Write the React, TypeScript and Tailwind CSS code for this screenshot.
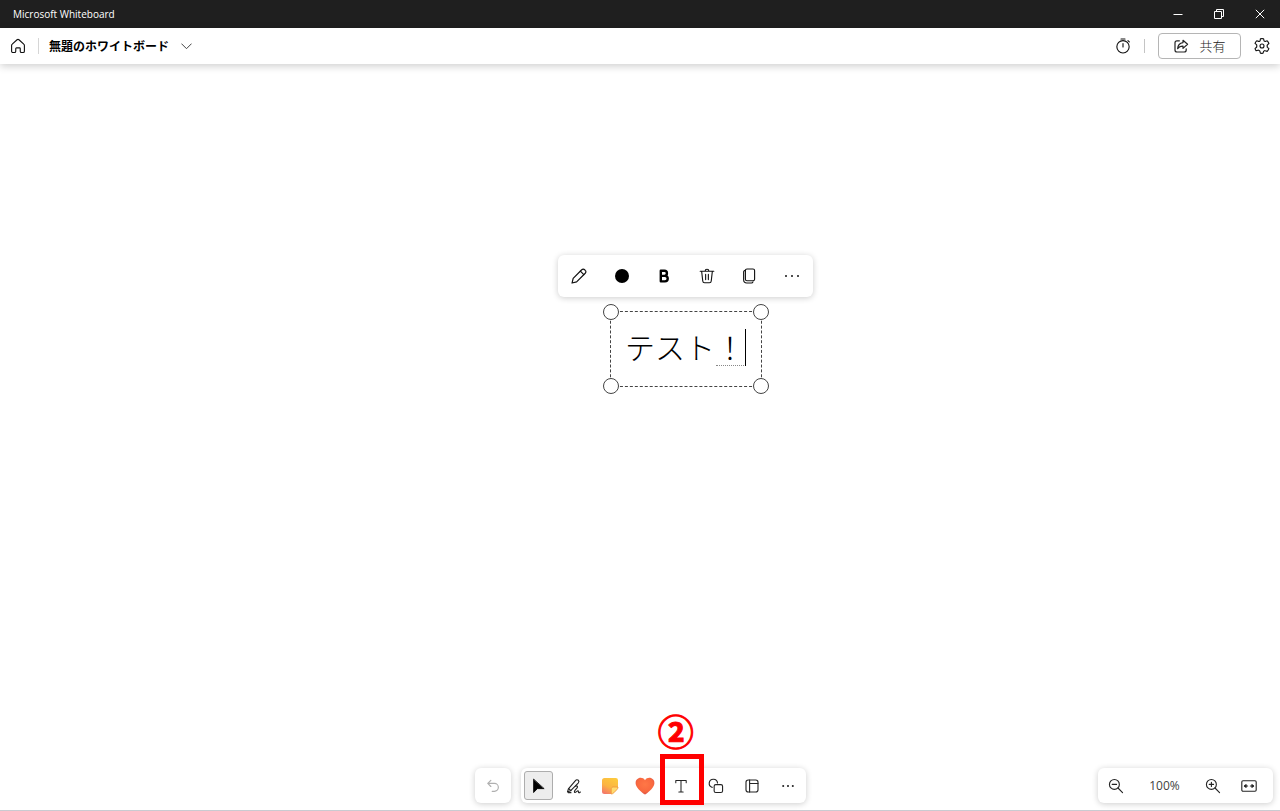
import type { ReactNode } from "react";

type IconProps = {
  size?: number;
  width?: number;
  children: ReactNode;
};

function Icon({ size = 16, width = 1.2, children }: IconProps) {
  return (
    <svg
      width={size}
      height={size}
      viewBox="0 0 20 20"
      fill="none"
      stroke="currentColor"
      strokeWidth={width}
      strokeLinecap="round"
      strokeLinejoin="round"
      aria-hidden="true"
      className="shrink-0"
    >
      {children}
    </svg>
  );
}

function TitleBar() {
  return (
    <div className="flex h-7 items-center justify-between bg-[#1f1f1f] pl-[13px] text-white">
      <h1 className="font-['Open_Sans','Noto_Sans',sans-serif] text-[10px] leading-4">Microsoft Whiteboard</h1>
      <div className="flex">
        <button aria-label="Minimize" className="flex h-7 w-[41px] items-center justify-center">
          <svg width="10" height="10" viewBox="0 0 10 10" stroke="currentColor" fill="none">
            <path d="M0.5 5.5h9" />
          </svg>
        </button>
        <button aria-label="Restore" className="flex h-7 w-[41px] items-center justify-center">
          <svg width="10" height="10" viewBox="0 0 10 10" stroke="currentColor" fill="none">
            <path d="M0.5 2.5h7v7h-7zM2.5 2.5v-2h7v7h-2" />
          </svg>
        </button>
        <button aria-label="Close" className="flex h-7 w-[41px] items-center justify-center">
          <svg width="10" height="10" viewBox="0 0 10 10" stroke="currentColor" fill="none">
            <path d="M0.8 0.8l8.4 8.4M9.2 0.8L0.8 9.2" />
          </svg>
        </button>
      </div>
    </div>
  );
}

function Header() {
  return (
    <header className="relative z-10 flex h-9 items-center justify-between bg-white px-2.5 shadow-[0_2px_8px_rgba(0,0,0,0.2)]">
      <div className="flex items-center">
        <button aria-label="ホーム">
          <Icon width={1.4}>
            <path d="M2 9.4c0-.7.3-1.3.8-1.700l6-5.500c.7-.6 1.700-.6 2.400 0l6 5.500c.5.4.8 1 .8 1.700v7.100c0 1-.7 1.700-1.600 1.700h-2c-.9 0-1.600-.7-1.600-1.600v-3.400c0-.5-.4-.9-.9-.9H8.100c-.5 0-.9.4-.9.9v3.400c0 .9-.7 1.600-1.600 1.600h-2C2.700 18.200 2 17.500 2 16.500z" />
          </Icon>
        </button>
        <span className="ml-3 h-4 w-px bg-[#d6d6d6]" />
        <button className="ml-2.5 flex items-center gap-3 text-xs font-bold text-black">
          無題のホワイトボード
          <svg width="11" height="7" viewBox="0 0 11 7" fill="none" stroke="#444" strokeLinecap="round">
            <path d="M0.7 0.9l4.8 4.8 4.8-4.8" />
          </svg>
        </button>
      </div>
      <div className="flex items-center">
        <button aria-label="タイマー">
          <Icon width={1.4}>
            <circle cx="10" cy="11" r="7.700" />
            <path d="M10 7v4.300M7.500 1.200h5M16.200 3.300l1.700 1.600" />
          </Icon>
        </button>
        <span className="ml-[13px] h-3.5 w-px bg-[#c4c4c4]" />
        <button className="ml-[13px] flex h-[26px] w-[83px] items-center justify-center gap-2.5 rounded border border-[#b5b5b5] text-[13px] leading-4 font-light text-[#242424]">
          <Icon width={1.5}>
            <path d="M8 3.500H5A2.500 2.500 0 0 0 2.500 6v9A2.500 2.500 0 0 0 5 17.500h9a2.500 2.500 0 0 0 2.500-2.500v-1.500" />
            <path d="M12.500 2.800l5.700 5.100-5.700 5.100v-2.900c-3.300-.1-5.300 1.100-6.700 3.200.3-4.200 2.700-7 6.700-7.600z" />
          </Icon>
          共有
        </button>
        <button aria-label="設定" className="ml-[13px]">
          <Icon width={1.4}>
            <circle cx="10" cy="10" r="2.500" />
            <path d="M8 1q2-.4 4 0l.5 2.400q.2.900 1.100.6l.6.3 2.300-.8q1.500 1.400 2.100 3.400l-1.800 1.600q-.7.800-.2 1.400v.6q-.4.500.2 1.200l1.800 1.600q-.6 2-2.100 3.400l-2.400-.8q-.8-.3-1.200.2l-.5.3q-.5.200-.6.900L11.300 19q-1.300.3-3.300 0l-.6-2.400q-.2-.7-.8-.9l-.4-.2q-.6-.4-1.300-.2l-2.300.7Q1.800 14.700 1.300 13.300l1.800-1.700q.6-.6.3-1.200v-.8q.3-.7-.3-1.300L1.300 6.700Q1.900 4.800 3.400 3.500l2.400.7q.7.200 1.200-.2l.3-.1q.3-.2.400-.7z" />
          </Icon>
        </button>
      </div>
    </header>
  );
}

function ObjectToolbar() {
  return (
    <div
      role="toolbar"
      className="absolute top-[191px] left-[558px] grid h-[42px] w-[255px] grid-cols-6 rounded-md bg-white shadow-[0_1px_6px_rgba(0,0,0,0.2)] *:flex *:items-center *:justify-center"
    >
      <button aria-label="編集">
        <Icon width={1.5}>
          <path d="M13.400 2.200a2.500 2.500 0 0 1 3.700 0l.7.700a2.500 2.500 0 0 1 0 3.700L7 17.400l-5.700 1.400L2.700 13z" />
          <path d="M11.700 4l4.300 4.300" />
        </Icon>
      </button>
      <button aria-label="色">
        <span className="size-3.5 rounded-full bg-black" />
      </button>
      <button aria-label="太字" className="text-black">
        <Icon width={3}>
          <path d="M6 3.500h4.500a3.100 3.100 0 0 1 0 6.300H6zM6 9.800h5.200a3.400 3.400 0 0 1 0 6.900H6z" />
        </Icon>
      </button>
      <button aria-label="削除">
        <Icon width={1.4}>
          <path d="M1.500 4h17M3.300 4l1.400 12.300A2.400 2.400 0 0 0 7 18.500h6a2.400 2.400 0 0 0 2.300-2.200L16.700 4M7.700 3.800a2.300 2.300 0 0 1 4.600 0M8.300 8v6.500M11.700 8v6.500" />
        </Icon>
      </button>
      <button aria-label="コピー">
        <Icon width={1.4}>
          <rect x="5.500" y="1.200" width="11.500" height="14.800" rx="2" />
          <path d="M5.500 3A2 2 0 0 0 3.300 5.200v9.600a4 4 0 0 0 4 4H13a2.200 2.200 0 0 0 2-1.500" />
        </Icon>
      </button>
      <button aria-label="その他" className="text-black">
        <Icon width={2.3}>
          <path d="M2.500 10h.01M10 10h.01M17.500 10h.01" />
        </Icon>
      </button>
    </div>
  );
}

function TextObject() {
  return (
    <div className="absolute top-[247px] left-[610px] flex h-[76px] w-[152px] items-start border border-dashed border-[#444] pt-3.5 pl-3.5">
      <div className="relative">
        <input
          aria-label="テキスト"
          defaultValue="テスト！"
          className="block h-10 w-[121px] bg-transparent text-[30px] leading-[38px] font-light text-black outline-none"
        />
        <span className="absolute right-0 bottom-0 w-[30px] border-b border-dotted border-[#888]" />
        <span className="absolute right-0 bottom-0 h-[37px] w-px bg-black" />
      </div>
      <span className="absolute -top-2 -left-2 size-4 rounded-full border border-[#444] bg-white" />
      <span className="absolute -top-2 -right-2 size-4 rounded-full border border-[#444] bg-white" />
      <span className="absolute -bottom-2 -left-2 size-4 rounded-full border border-[#444] bg-white" />
      <span className="absolute -right-2 -bottom-2 size-4 rounded-full border border-[#444] bg-white" />
    </div>
  );
}

function CreationBar() {
  return (
    <div className="flex gap-2.5">
      <button
        aria-label="元に戻す"
        className="flex h-[35px] w-9 items-center justify-center rounded-md bg-white text-[#b0b0b0] shadow-[0_1px_6px_rgba(0,0,0,0.2)]"
      >
        <Icon width={1.5}>
          <path d="M7.300 3L3.500 6.800l3.800 3.800M3.500 6.800h8.300a4.900 4.900 0 0 1 0 9.800H9" />
        </Icon>
      </button>
      <div
        role="toolbar"
        className="grid h-[35px] w-[285px] grid-cols-8 items-center justify-items-center rounded-md bg-white text-[#242424] shadow-[0_1px_6px_rgba(0,0,0,0.2)]"
      >
        <button
          aria-label="選択"
          className="flex size-[29px] items-center justify-center rounded-[3px] border border-[#adadad] bg-[#ededed] text-black"
        >
          <Icon width={1}>
            <path d="M4.500 1.800v16.400l4.700-4.900h8z" fill="currentColor" />
          </Icon>
        </button>
        <button aria-label="インク">
          <Icon width={1.4}>
            <path d="M3 13.700L11.800 3.200c1.200-1.400 2.700-1.300 3.600-.4.900.9.900 2.300-.2 3.500l-9 9.300-4.300 1.900z" />
            <path d="M12 10.300c1.300-.9 2.700-.4 2.300 1.200-.4 1.700-5 4.800-3.600 6.300 1.200 1.200 3.600-2.600 4.600-1.600.6.700-.2 1.900.7 2.200.6.200 1.300-.3 1.900-.9M3.500 13.500l2.700 2.200M3 18.300h3.200" />
          </Icon>
        </button>
        <button aria-label="付箋">
          <svg width="18" height="18" viewBox="0 0 18 18" aria-hidden="true">
            <defs>
              <linearGradient id="note" x1="0.7" y1="0" x2="0.2" y2="1">
                <stop offset="0" stopColor="#fdc93d" />
                <stop offset="0.55" stopColor="#fbb443" />
                <stop offset="1" stopColor="#f4766b" />
              </linearGradient>
            </defs>
            <path d="M3.500 1h11.200A2.300 2.300 0 0 1 17 3.300v6.900L10.300 17H3.500A2.500 2.500 0 0 1 1 14.500v-11A2.500 2.500 0 0 1 3.500 1z" fill="url(#note)" />
            <path d="M17 10c0 1-.5 2-1.200 2.700l-3 3.100c-.7.700-1.600 1.200-2.600 1.200v-5c0-1.100.9-2 2-2z" fill="#ffdc70" stroke="#f09a3e" strokeWidth="0.9" />
          </svg>
        </button>
        <button aria-label="リアクション">
          <svg width="20" height="18" viewBox="0 0 20 18" aria-hidden="true">
            <defs>
              <radialGradient id="heart" cx="0.5" cy="0.4" r="0.6">
                <stop offset="0" stopColor="#ff7746" />
                <stop offset="0.7" stopColor="#f9693f" />
                <stop offset="1" stopColor="#dc5548" />
              </radialGradient>
            </defs>
            <path d="M10 3.200C11.500.8 14 .4 16 1.100c2.400.9 3.500 3 3.400 5.200-.2 4.300-5 8-8.400 10.700-.6.500-1.400.5-2 0C5.600 14.300.8 10.600.6 6.300.5 4.100 1.600 2 4 1.100 6 .4 8.500.8 10 3.200z" fill="url(#heart)" />
          </svg>
        </button>
        <div className="relative flex">
          <button aria-label="テキスト">
            <Icon width={1.3}>
              <path d="M3.500 6V3h13v3M10 3v14.500M7.300 17.500h5.400" />
            </Icon>
          </button>
          <span className="absolute -top-6 -left-[13px] h-[51px] w-11 border-[5px] border-[#f00]" />
          <span className="absolute -top-[68px] -left-[17px] w-10 text-center text-[36px] leading-[40px] font-bold text-[#f00] [-webkit-text-stroke:1px_#f00]">
            ②
          </span>
        </div>
        <button aria-label="図形">
          <Icon width={1.4}>
            <path d="M5.300 11.700a5.200 5.200 0 1 1 6.600-5.400" />
            <rect x="7.700" y="8.300" width="10.500" height="9.900" rx="2" />
          </Icon>
        </button>
        <button aria-label="テンプレート">
          <Icon width={1.4}>
            <rect x="2.500" y="2.500" width="15" height="15" rx="2.800" />
            <path d="M7 2.500v15M7 6.800h10.500" />
          </Icon>
        </button>
        <button aria-label="その他">
          <Icon width={2.6}>
            <path d="M4 10h.01M10 10h.01M16 10h.01" />
          </Icon>
        </button>
      </div>
    </div>
  );
}

function ZoomBar() {
  return (
    <div className="flex h-[35px] w-[175px] items-center justify-between rounded-md bg-white pr-4 pl-2.5 text-[#242424] shadow-[0_1px_6px_rgba(0,0,0,0.2)]">
      <button aria-label="縮小">
        <Icon width={1.4}>
          <circle cx="8" cy="8" r="6.200" />
          <path d="M12.500 12.500l5.700 5.700M5.300 8h5.400" />
        </Icon>
      </button>
      <span className="font-['Open_Sans','Noto_Sans',sans-serif] text-xs text-[#424242]">100%</span>
      <div className="flex gap-5">
        <button aria-label="拡大">
          <Icon width={1.4}>
            <circle cx="8" cy="8" r="6.200" />
            <path d="M12.500 12.500l5.700 5.700M5.300 8h5.400M8 5.300v5.400" />
          </Icon>
        </button>
        <button aria-label="画面に合わせる">
          <Icon width={1.4}>
            <rect x="1" y="3.500" width="18" height="13" rx="1.500" />
            <path d="M8.300 10H4.500M11.700 10h3.800" />
            <path d="M6.300 8.300v3.400L4.300 10zM13.700 8.300v3.400l2-1.700z" fill="currentColor" />
          </Icon>
        </button>
      </div>
    </div>
  );
}

export default function App() {
  return (
    <div className="flex min-h-screen flex-col bg-white font-['Noto_Sans_CJK_JP','Noto_Sans',sans-serif] text-[#111]">
      <TitleBar />
      <Header />
      <main className="relative flex flex-1 flex-col justify-end border-b border-[#c9cbd1]">
        <ObjectToolbar />
        <TextObject />
        <div className="grid grid-cols-[1fr_auto_1fr] items-center px-[7px] pb-[7px]">
          <span />
          <CreationBar />
          <div className="flex justify-end">
            <ZoomBar />
          </div>
        </div>
      </main>
    </div>
  );
}
